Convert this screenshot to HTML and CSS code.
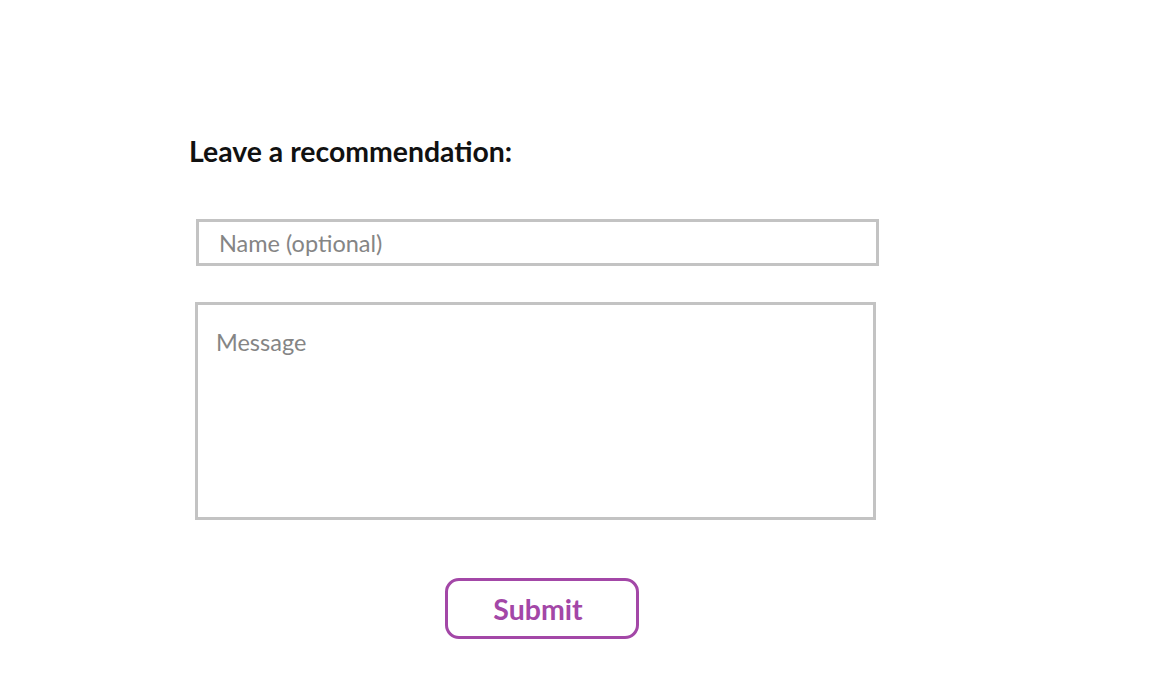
FILE: index.html
```html
<!DOCTYPE html>
<html>
<head>
<meta charset="utf-8">
<link rel="stylesheet" href="styles.css">
</head>
<body>
<div class="page">
  <h2 class="title">Leave a recommendation:</h2>
  <form class="form">
    <input class="name" type="text" placeholder="Name (optional)">
    <textarea class="message" placeholder="Message"></textarea>
    <div class="actions">
      <button class="submit" type="button">Submit</button>
    </div>
  </form>
</div>
</body>
</html>
```

FILE: styles.css
```css
html, body {
  margin: 0;
  padding: 0;
  background: #ffffff;
}
.page {
  padding: 135px 0 0 189px;
  font-family: Lato, "Open Sans", sans-serif;
}
.title {
  margin: 0;
  font-size: 28.4px;
  font-weight: 700;
  color: #111111;
  line-height: 32px;
}
.form {
  display: flex;
  flex-direction: column;
  margin-top: 52px;
}
.name {
  box-sizing: border-box;
  width: 683px;
  height: 47px;
  margin-left: 7px;
  border: 3px solid #c3c3c3;
  padding: 0 0 0 20px;
  font-family: inherit;
  font-size: 23.5px;
  color: #333;
  outline: none;
}
.message {
  box-sizing: border-box;
  width: 681px;
  height: 218px;
  margin: 36px 0 0 6px;
  border: 3px solid #c3c3c3;
  padding: 22px 18px;
  font-family: inherit;
  font-size: 23.5px;
  line-height: 30px;
  resize: none;
  outline: none;
}
.name::placeholder, .message::placeholder {
  color: #858585;
}
.actions {
  display: flex;
  margin-top: 58px;
  padding-left: 256px;
}
.submit {
  box-sizing: border-box;
  width: 194px;
  height: 61px;
  padding: 0 8px 0 0;
  border: 3px solid #a347a7;
  border-radius: 14px;
  background: #ffffff;
  color: #a347a7;
  font-family: inherit;
  font-size: 28.5px;
  font-weight: 700;
  cursor: pointer;
}
```
